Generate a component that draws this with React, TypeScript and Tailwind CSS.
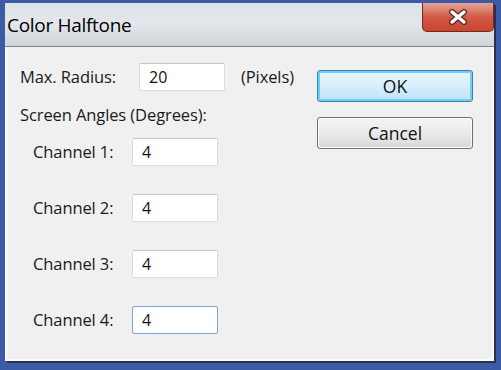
import React from "react";

const font = { fontFamily: '"Open Sans", "Noto Sans", sans-serif' };

function Field({ value, focused = false }: { value: string; focused?: boolean }) {
  return (
    <div
      className={
        "w-[86px] h-[28px] bg-white rounded-[2px] border flex items-center pl-[9px] text-[16px] text-[#111] " +
        (focused ? "border-[#7aa7d0]" : "border-[#d9dbde] border-t-[#c4c6ca]")
      }
    >
      {value}
    </div>
  );
}

function Channel({ n, focused = false }: { n: number; focused?: boolean }) {
  return (
    <div className="flex items-center h-[28px]">
      <div className="w-[112px] pl-[13px] text-[16.5px] tracking-[-0.1px] text-[#1a1a1a]">Channel {n}:</div>
      <Field value="4" focused={focused} />
    </div>
  );
}

export default function App() {
  return (
    <div
      className="w-[501px] h-[370px] bg-[#3b5ba7] pt-[3px] pl-[5px] pr-[7px] pb-[9px]"
      style={font}
    >
      <div className="h-full flex flex-col shadow-[2px_2px_0_#2a2f4a]">
        <div className="relative h-[44px] bg-gradient-to-b from-[#dfe2e6] via-[#e3e6ea] to-[#d0d4d9] flex items-center pl-[2px] border-b border-[#7c838b]">
          <span className="text-[19px] text-black tracking-[-0.3px] mt-[2px]">Color Halftone</span>
          <div className="absolute right-0 top-0 w-[72px] h-[29px] rounded-b-[5px] border border-t-0 border-[#6f2b22] bg-gradient-to-b from-[#e4a598] via-[#d25a45] to-[#c9452e] flex items-center justify-center">
            <svg width="22" height="16" viewBox="0 0 22 16">
              <path d="M5 3 L17 13 M17 3 L5 13" stroke="#5a2a24" strokeWidth="6" strokeLinecap="round" />
              <path d="M5 3 L17 13 M17 3 L5 13" stroke="#ffffff" strokeWidth="3.5" strokeLinecap="round" />
            </svg>
          </div>
        </div>
        <div className="flex-1 bg-[#f0f0f0] border-l-[2px] border-r-[2px] border-b-[2px] border-[#fbfbfb] flex">
          <div className="pl-[13px] pt-[16px] flex flex-col">
            <div className="flex items-center h-[28px]">
              <div className="w-[119px] text-[16.5px] tracking-[-0.1px] text-[#1a1a1a]">Max. Radius:</div>
              <Field value="20" />
              <div className="ml-[16px] text-[16.5px] tracking-[-0.1px] text-[#1a1a1a]">(Pixels)</div>
            </div>
            <div className="mt-[11px] h-[26px] flex items-center text-[16.5px] tracking-[-0.1px] text-[#1a1a1a]">
              Screen Angles (Degrees):
            </div>
            <div className="mt-[10px] flex flex-col gap-[28px]">
              <Channel n={1} />
              <Channel n={2} />
              <Channel n={3} />
              <Channel n={4} focused />
            </div>
          </div>
          <div className="ml-auto mr-[19px] pt-[23px] flex flex-col gap-[15px]">
            <div className="w-[156px] h-[32px] rounded-[3px] border border-[#3c7fb1] bg-gradient-to-b from-[#e9f5fc] via-[#d8eefb] to-[#bde3f9] shadow-[inset_0_0_0_2px_#6fd0f5] flex items-center justify-center text-[17.5px] text-[#111]">
              OK
            </div>
            <div className="w-[156px] h-[32px] rounded-[3px] border border-[#707070] bg-gradient-to-b from-[#f4f4f4] via-[#ebebeb] to-[#d7d7d7] shadow-[inset_0_0_0_1px_#fbfbfb] flex items-center justify-center text-[17.5px] text-[#111]">
              Cancel
            </div>
          </div>
        </div>
      </div>
    </div>
  );
}
